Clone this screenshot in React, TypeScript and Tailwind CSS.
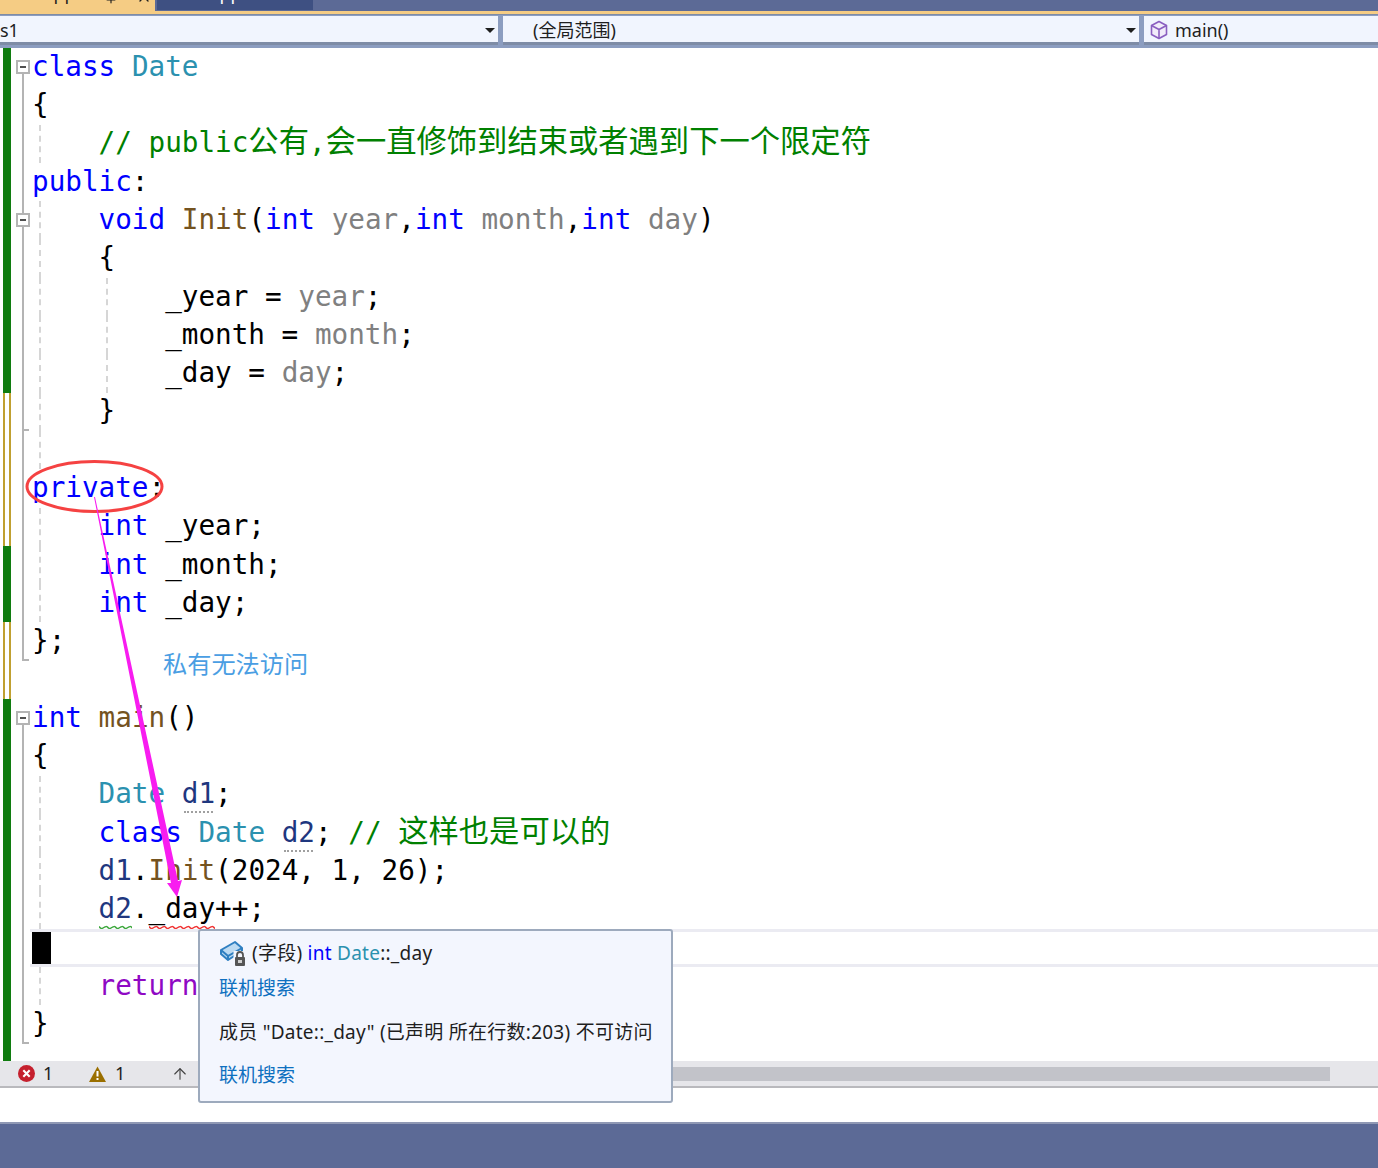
import { ArrowUp, Pin, X } from "lucide-react";
import type { ReactNode } from "react";

const mono = "font-['DejaVu_Sans_Mono','Noto_Sans_CJK_SC',monospace]";

type Fold = "none" | "open" | "mid" | "line" | "tick" | "end";

function Kw({ children }: { children: ReactNode }) {
  return <span className="text-[#0000ff]">{children}</span>;
}
function Ty({ children }: { children: ReactNode }) {
  return <span className="text-[#2b91af]">{children}</span>;
}
function Param({ children }: { children: ReactNode }) {
  return <span className="text-[#808080]">{children}</span>;
}
function Fn({ children }: { children: ReactNode }) {
  return <span className="text-[#74531f]">{children}</span>;
}
function Local({ children }: { children: ReactNode }) {
  return <span className="text-[#1f377f]">{children}</span>;
}
function Comment({ children }: { children: ReactNode }) {
  return <span className="text-[#008000]">{children}</span>;
}
function Cjk({ children }: { children: ReactNode }) {
  return <span className="text-[30.3px] leading-[0] font-['Noto_Sans_CJK_SC',sans-serif]">{children}</span>;
}

// dotted hint under a local
function Dotted({ children }: { children: ReactNode }) {
  return (
    <span className="relative">
      {children}
      <span className="absolute left-[2px] right-[2px] bottom-[-3px] border-b-2 border-dotted border-[#a0a0a0]" />
    </span>
  );
}

function Squiggle({ color, children }: { color: string; children: ReactNode }) {
  return (
    <span className="relative">
      {children}
      <svg className="absolute left-0 bottom-[-5px] w-full h-[5px]" preserveAspectRatio="none">
        <defs>
          <pattern id={"wave" + color} width="8" height="5" patternUnits="userSpaceOnUse">
            <path d="M0 1.5 Q2 4.5 4 3 T8 1.5" fill="none" stroke={color} strokeWidth="1.5" />
          </pattern>
        </defs>
        <rect width="100%" height="5" fill={"url(#wave" + color + ")"} />
      </svg>
    </span>
  );
}

function Row({
  mark = "green",
  fold = "none",
  guides = [],
  current = false,
  children,
}: {
  mark?: "green" | "yellow";
  fold?: Fold;
  guides?: ("outer" | "inner")[];
  current?: boolean;
  children?: ReactNode;
}) {
  return (
    <div className="relative flex h-[38.3px] shrink-0">
      <div
        className={
          mark === "green"
            ? "ml-[3px] w-[8px] bg-[#107c10]"
            : "ml-[3px] w-[8px] border-x-2 border-[#c0a030] bg-white"
        }
      />
      <div className="relative w-[22px]">
        {(fold === "line" || fold === "mid" || fold === "tick") && (
          <div className="absolute left-[11px] top-0 bottom-0 w-[2px] bg-[#b4b4b4]" />
        )}
        {fold === "open" && <div className="absolute left-[11px] top-[19px] bottom-0 w-[2px] bg-[#b4b4b4]" />}
        {fold === "end" && <div className="absolute left-[11px] top-0 bottom-0 w-[2px] bg-[#b4b4b4]" />}
        {(fold === "tick" || fold === "end") && (
          <div className="absolute left-[11px] bottom-0 w-[7px] h-[2px] bg-[#b4b4b4]" />
        )}
        {(fold === "open" || fold === "mid") && (
          <div className="absolute left-[5px] top-[12px] w-[14px] h-[14px] border-2 border-[#b4b4b4] bg-white flex items-center justify-center">
            <div className="w-[6px] h-[2px] bg-[#505050]" />
          </div>
        )}
      </div>
      {guides.includes("outer") && (
        <div className="absolute left-[39px] top-0 bottom-0 border-l-2 border-dashed border-[#d6d6d6]" />
      )}
      {guides.includes("inner") && (
        <div className="absolute left-[106px] top-0 bottom-0 border-l-2 border-dashed border-[#d6d6d6]" />
      )}
      {current && (
        <div className="absolute left-[30px] right-0 top-0 bottom-0 border-y-[3px] border-[#ebebf2]">
          <div className="ml-[2px] w-[19px] h-full bg-black" />
        </div>
      )}
      <pre className={"relative flex-1 flex items-center ml-[-1px] pb-[1px] text-[27.65px] leading-none text-black " + mono}>
        <span>{children}</span>
      </pre>
    </div>
  );
}

function DropCaret() {
  return <div className="w-0 h-0 border-x-[5px] border-t-[5px] border-x-transparent border-t-[#1e1e1e]" />;
}

function FieldIcon() {
  return (
    <svg width="28" height="26" viewBox="0 0 28 26" fill="none" className="shrink-0">
      <path d="M2 10 L16 2 L23 8 V11 L9 20 L2 14 Z" fill="#bcdaf2" stroke="#2f7fc1" strokeWidth="2" strokeLinejoin="round" />
      <path d="M2 10 L9 16 L23 8 M9 16 V20" stroke="#2f7fc1" strokeWidth="2" />
      <rect x="14.5" y="11" width="13" height="15" fill="#f3f6fe" />
      <rect x="16" y="17" width="10" height="9" rx="1" fill="#555555" />
      <path d="M18 17 V15 a3 3 0 0 1 6 0 V17" stroke="#555555" strokeWidth="1.8" />
      <rect x="19" y="20" width="4" height="3" fill="#d0d0d0" />
    </svg>
  );
}

export default function App() {
  return (
    <div className="relative w-[1378px] h-[1168px] overflow-hidden bg-white flex flex-col">
      {/* tab strip, cut off at the top edge */}
      <div className="h-[11px] shrink-0 bg-[#5c6a96] flex overflow-hidden">
        <div className="w-[155px] bg-[#f5cc84] flex items-end pl-[6px] text-[#1e1e1e]">
          <span className="text-[18px] leading-[22px] mb-[7px] font-['Noto_Sans',sans-serif]">Test.cpp</span>
          <Pin className="ml-[28px] mb-[7px] w-[14px] h-[14px]" />
          <X className="ml-[18px] mb-[6px] w-[16px] h-[16px]" />
        </div>
        <div className="ml-[2px] w-[156px] h-[10px] bg-[#3e5082] flex items-end pl-[15px] text-white overflow-hidden">
          <span className="text-[18px] leading-[22px] mb-[6px] font-['Noto_Sans',sans-serif]">Test.cpp</span>
        </div>
      </div>
      <div className="h-[3px] shrink-0 bg-[#f5cc84]" />

      {/* navigation bar */}
      <div className="h-[34px] shrink-0 bg-[#8c9dc0] border-t-[1px] border-t-[#7e8ca6] flex pt-[1px] pb-[3px] gap-[5px] text-[18px] text-[#1e1e1e] font-['Noto_Sans','Noto_Sans_CJK_SC',sans-serif]">
        <div className="w-[498px] border-b-[3px] border-b-[#7e8ca6] bg-[#f1f5fe] flex items-center justify-between pt-[2px] pr-[3px]">
          <span>s1</span>
          <DropCaret />
        </div>
        <div className="w-[636px] border-b-[3px] border-b-[#7e8ca6] bg-[#f1f5fe] flex items-center justify-between pt-[2px] pl-[30px] pr-[3px]">
          <span>(全局范围)</span>
          <DropCaret />
        </div>
        <div className="flex-1 border-b-[3px] border-b-[#7e8ca6] bg-[#f1f5fe] flex items-center pt-[2px] pl-[6px] gap-[7px]">
          <svg width="18" height="20" viewBox="0 0 18 20" fill="none" stroke="#8a5fc0" strokeWidth="1.6" strokeLinejoin="round">
            <path d="M9 1.5 L16.5 5.5 V14.5 L9 18.5 L1.5 14.5 V5.5 Z" fill="#f1ecfa" />
            <path d="M1.5 5.5 L9 9.5 L16.5 5.5 M9 9.5 V18.5" />
          </svg>
          <span>main()</span>
        </div>
      </div>

      {/* editor */}
      <div className="flex-1 flex flex-col">
        <Row fold="open"><Kw>class</Kw> <Ty>Date</Ty></Row>
        <Row fold="line">{"{"}</Row>
        <Row fold="line" guides={["outer"]}>
          {"    "}<Comment>// public<Cjk>公有</Cjk>,<Cjk>会一直修饰到结束或者遇到下一个限定符</Cjk></Comment>
        </Row>
        <Row fold="line"><Kw>public</Kw>:</Row>
        <Row fold="mid" guides={["outer"]}>
          {"    "}<Kw>void</Kw> <Fn>Init</Fn>(<Kw>int</Kw> <Param>year</Param>,<Kw>int</Kw> <Param>month</Param>,<Kw>int</Kw> <Param>day</Param>)
        </Row>
        <Row fold="line" guides={["outer"]}>{"    {"}</Row>
        <Row fold="line" guides={["outer", "inner"]}>{"        _year = "}<Param>year</Param>;</Row>
        <Row fold="line" guides={["outer", "inner"]}>{"        _month = "}<Param>month</Param>;</Row>
        <Row fold="line" guides={["outer", "inner"]}>{"        _day = "}<Param>day</Param>;</Row>
        <Row mark="yellow" fold="tick" guides={["outer"]}>{"    }"}</Row>
        <Row mark="yellow" fold="line" guides={["outer"]} />
        <Row mark="yellow" fold="line"><Kw>private</Kw>:</Row>
        <Row mark="yellow" fold="line" guides={["outer"]}>{"    "}<Kw>int</Kw> _year;</Row>
        <Row fold="line" guides={["outer"]}>{"    "}<Kw>int</Kw> _month;</Row>
        <Row fold="line" guides={["outer"]}>{"    "}<Kw>int</Kw> _day;</Row>
        <Row mark="yellow" fold="end">{"};"}</Row>
        <Row mark="yellow" />
        <Row fold="open"><Kw>int</Kw> <Fn>main</Fn>()</Row>
        <Row fold="line">{"{"}</Row>
        <Row fold="line" guides={["outer"]}>{"    "}<Ty>Date</Ty> <Dotted><Local>d1</Local></Dotted>;</Row>
        <Row fold="line" guides={["outer"]}>
          {"    "}<Kw>class</Kw> <Ty>Date</Ty> <Dotted><Local>d2</Local></Dotted>; <Comment>// <Cjk>这样也是可以的</Cjk></Comment>
        </Row>
        <Row fold="line" guides={["outer"]}>{"    "}<Local>d1</Local>.<Fn>Init</Fn>(2024, 1, 26);</Row>
        <Row fold="line" guides={["outer"]}>
          {"    "}<Squiggle color="#3aa63a"><Local>d2</Local></Squiggle>.<Squiggle color="#f03030">_day</Squiggle>++;
        </Row>
        <Row fold="line" guides={["outer"]} current />
        <Row fold="line" guides={["outer"]}>{"    "}<span className="text-[#8f08c4]">return</span> 0;</Row>
        <Row fold="end">{"}"}</Row>
        <div className="flex-1 flex">
          <div className="ml-[3px] w-[8px] bg-[#107c10]" />
        </div>
      </div>

      {/* bottom of the editor: error counts and scrollbar */}
      <div className="h-[27px] shrink-0 bg-[#e6e6ea] border-b-2 border-b-[#b9b9bd] flex items-center text-[18px] text-[#1e1e1e] font-['Noto_Sans',sans-serif]">
        <div className="w-[200px] shrink-0 flex items-center pl-[18px]">
          <svg width="17" height="17" viewBox="0 0 16 16">
            <circle cx="8" cy="8" r="8" fill="#c5202e" />
            <path d="M5 5 L11 11 M11 5 L5 11" stroke="#fff" strokeWidth="2" />
          </svg>
          <span className="ml-[8px] w-[46px]">1</span>
          <svg width="17" height="16" viewBox="0 0 17 16">
            <path d="M8.5 0.5 L17 16 H0 Z" fill="#9a6f00" />
            <path d="M8.5 5 V10.5 M8.5 12 V14" stroke="#fff" strokeWidth="2" />
          </svg>
          <span className="ml-[9px] w-[56px]">1</span>
          <ArrowUp className="w-[18px] h-[18px] text-[#424242]" strokeWidth={1.5} />
        </div>
        <div className="flex-1 h-[14px] ml-[10px] mr-[48px] bg-[#c2c3c9]" />
      </div>
      <div className="h-[34px] shrink-0 bg-white" />
      <div className="h-[46px] shrink-0 bg-[#5c6a96] border-t-2 border-t-[#8f98b4]" />

      {/* hand drawn annotations on top of the screenshot */}
      <svg className="absolute inset-0 pointer-events-none" width="1378" height="1168">
        <ellipse cx="94.5" cy="486.5" rx="67.5" ry="25" fill="none" stroke="#f54242" strokeWidth="3" />
        <polygon points="94,497 95,497 178,881 182,880 177,897 167,883 171,883" fill="#f81cf0" />
      </svg>
      <span className="absolute left-[163px] top-[646px] text-[24.2px] leading-[34px] text-[#4a9ee3] font-['Noto_Sans_CJK_SC',sans-serif]">
        私有无法访问
      </span>

      {/* quick info tooltip */}
      <div className="absolute left-[198px] top-[929px] w-[475px] h-[174px] rounded-[3px] border-2 border-[#9daabd] bg-[#f3f6fe] pl-[19px] pt-[7px] text-[19px] tracking-[0.25px] text-[#1e1e1e] font-['Noto_Sans','Noto_Sans_CJK_SC',sans-serif]">
        <div className="flex items-center h-[30px] gap-[5px]">
          <FieldIcon />
          <span>
            (字段) <span className="text-[#0000ff]">int</span> <span className="text-[#2b91af]">Date</span>::_day
          </span>
        </div>
        <div className="mt-[5px] h-[30px] leading-[30px] tracking-normal text-[#0e70c0]">联机搜索</div>
        <div className="mt-[14px] h-[30px] leading-[30px]">成员 "Date::_day" (已声明 所在行数:203) 不可访问</div>
        <div className="mt-[13px] h-[30px] leading-[30px] tracking-normal text-[#0e70c0]">联机搜索</div>
      </div>
    </div>
  );
}
